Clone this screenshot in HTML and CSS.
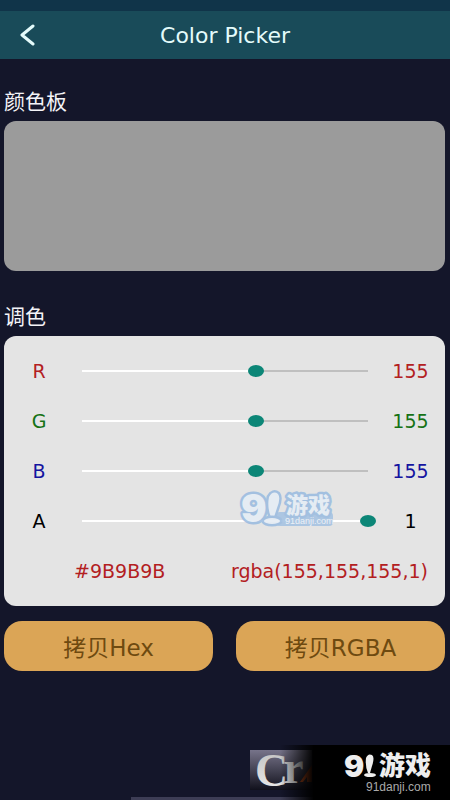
FILE: index.html
```html
<!DOCTYPE html>
<html lang="zh-CN">
<head>
  <meta charset="utf-8">
  <title>Color Picker</title>
  <meta name="viewport" content="width=device-width, initial-scale=1">
  <link rel="stylesheet" href="styles.css">
</head>
<body>
  <header class="topbar">
    <button class="back" type="button" aria-label="返回">
      <svg width="18" height="22" viewBox="0 0 18 22"><path d="M15 2 L4 11 L15 20" fill="none" stroke="#e4fbfb" stroke-width="3" stroke-linecap="round" stroke-linejoin="round"/></svg>
    </button>
    <h1>Color Picker</h1>
  </header>

  <main class="content">
    <h2>颜色板</h2>
    <div class="palette" id="palette"></div>

    <h2>调色</h2>
    <div class="panel">
      <div class="row red">
        <label for="r">R</label>
        <input type="range" id="r" min="0" max="255" value="155" style="--fill: 60.8%">
        <output for="r" id="r-value">155</output>
      </div>
      <div class="row green">
        <label for="g">G</label>
        <input type="range" id="g" min="0" max="255" value="155" style="--fill: 60.8%">
        <output for="g" id="g-value">155</output>
      </div>
      <div class="row blue">
        <label for="b">B</label>
        <input type="range" id="b" min="0" max="255" value="155" style="--fill: 60.8%">
        <output for="b" id="b-value">155</output>
      </div>
      <div class="row alpha">
        <label for="a">A</label>
        <input type="range" id="a" min="0" max="1" step="0.01" value="1" style="--fill: 100%">
        <output for="a" id="a-value">1</output>
        <svg class="stamp" width="100" height="42" viewBox="0 0 100 42">
          <rect x="38" y="24" width="57" height="14" rx="4" fill="#a6c3e2"/>
          <g class="stamp-edge">
            <text class="mark" x="3" y="34" font-size="38">9</text>
            <path d="M31 9 Q35 2 40 6 Q43 10 39 20 L36 29 L33 29 Q29 20 31 9 Z"/>
            <ellipse cx="34" cy="33" rx="8" ry="3"/>
            <text class="mark-cn" x="48" y="25" font-size="22">游戏</text>
          </g>
          <text class="mark-url" x="47" y="36" font-size="9" fill="#edf2f8">91danji.com</text>
        </svg>
      </div>
      <div class="codes">
        <span id="hex">#9B9B9B</span>
        <span id="rgba">rgba(155,155,155,1)</span>
      </div>
    </div>

    <div class="buttons">
      <button type="button" id="copy-hex">拷贝Hex</button>
      <button type="button" id="copy-rgba">拷贝RGBA</button>
    </div>
  </main>

  <div class="homebar"></div>
  <div class="banner">
    <svg width="200" height="55" viewBox="0 0 200 55">
      <defs>
        <linearGradient id="tile" x1="0" y1="0" x2="0" y2="1">
          <stop offset="0" stop-color="#77748a"/>
          <stop offset="1" stop-color="#11111c"/>
        </linearGradient>
        <linearGradient id="fade" x1="0" y1="0" x2="1" y2="0">
          <stop offset="0" stop-color="#000" stop-opacity="0"/>
          <stop offset="1" stop-color="#000"/>
        </linearGradient>
        <linearGradient id="silver" x1="0" y1="0" x2="0" y2="1">
          <stop offset="0" stop-color="#bbb"/>
          <stop offset="1" stop-color="#eee"/>
        </linearGradient>
      </defs>
      <rect x="0" y="5" width="62" height="40" fill="url(#tile)"/>
      <text class="serif" x="5" y="41" font-size="46" fill="url(#silver)">C<tspan dx="-5" dy="-3">r</tspan></text>
      <path d="M50 37 L62 20 V37 H57 V32 L53 37 Z" fill="#c4521f"/>
      <rect x="30" y="0" width="34" height="55" fill="url(#fade)"/>
      <rect x="63" y="0" width="137" height="55"/>
      <g fill="#eee">
        <text class="mark" x="94" y="32" font-size="30">9</text>
        <path d="M116 13 Q118 8 122 10 Q125 12 122 21 L120 28 L118 28 Q115 21 116 13 Z"/>
        <ellipse cx="120" cy="30" rx="6" ry="2"/>
        <text class="mark-cn" x="129" y="30" font-size="26">游戏</text>
        <text class="mark-url" x="116" y="46" font-size="12" fill="#aaa">91danji.com</text>
      </g>
    </svg>
  </div>

  <script src="picker.js"></script>
</body>
</html>
```
FILE: styles.css
```css
* {
  box-sizing: border-box;
}
body {
  margin: 0;
  min-height: 100vh;
  position: relative;
  background-color: #14162a;
  font-family: "DejaVu Sans", "Noto Sans CJK SC", sans-serif;
  font-size: 19px;
}
h1, h2 {
  margin: 0;
  font-weight: normal;
}
button {
  border: 0;
  font: inherit;
  cursor: pointer;
}
.topbar {
  display: grid;
  grid-template-columns: 54px 1fr 54px;
  align-items: center;
  height: 59px;
  border-top: 11px solid #103449;
  background-color: #194b59;
}
.topbar h1 {
  font-size: 22px;
  text-align: center;
  color: #e4fbfb;
}
.back {
  display: flex;
  justify-content: center;
  padding: 0;
  background: none;
}
.content {
  padding: 28px 5px 0 4px;
}
.content h2 {
  height: 34px;
  line-height: 30px;
  font-size: 21px;
  color: #f4f4f8;
}
.palette {
  height: 150px;
  margin-bottom: 31px;
  border-radius: 12px;
  background-color: #9b9b9b;
}
.panel {
  padding: 10px 0;
  border-radius: 12px;
  background-color: #e4e4e4;
}
.row {
  display: grid;
  grid-template-columns: 70px 1fr 69px;
  align-items: center;
  height: 50px;
  position: relative;
}
.row label, .row output {
  text-align: center;
}
.red { color: #b3201f; }
.green { color: #157215; }
.blue { color: #1414a0; }
.alpha { color: #000; }

/* the line is inset by half a thumb on each side */
input[type="range"] {
  -webkit-appearance: none;
  appearance: none;
  width: 100%;
  height: 20px;
  margin: 0;
  background-color: transparent;
  background-image: linear-gradient(to right, #fff var(--fill), #bfbfbf var(--fill));
  background-size: calc(100% - 16px) 2px;
  background-position: center;
  background-repeat: no-repeat;
}
input[type="range"]::-webkit-slider-thumb {
  -webkit-appearance: none;
  width: 16px;
  height: 12px;
  border-radius: 50%;
  background-color: #0c8677;
}
.codes {
  display: flex;
  justify-content: space-between;
  align-items: center;
  height: 50px;
  padding: 0 17px 0 70px;
  color: #b3201f;
}
.buttons {
  display: grid;
  grid-template-columns: 1fr 1fr;
  gap: 23px;
  margin-top: 15px;
}
.buttons button {
  height: 50px;
  padding: 0;
  border-radius: 18px;
  font-size: 23px;
  color: #6e4a10;
  background-color: #dba556;
}
.stamp {
  position: absolute;
  left: 234px;
  top: -8px;
  overflow: visible;
  opacity: .9;
  pointer-events: none;
}
.stamp-edge {
  fill: #e6edf5;
  stroke: #9dbde0;
  stroke-width: 5px;
  stroke-linejoin: round;
  paint-order: stroke;
}
.mark {
  font-family: Inter, sans-serif;
  font-weight: 900;
}
.mark-cn {
  font-family: "Noto Sans CJK SC", sans-serif;
  font-weight: 900;
}
.mark-url {
  font-family: "Liberation Sans", sans-serif;
}
.serif {
  font-family: "Liberation Serif", serif;
  font-weight: bold;
}
.homebar {
  position: absolute;
  left: 29%;
  right: 29%;
  bottom: 0;
  height: 3px;
  background-color: #3d3d55;
}
.banner {
  position: absolute;
  right: 0;
  bottom: 0;
}
.banner svg {
  display: block;
}
```
FILE: picker.js
```javascript
var sliders = ['r', 'g', 'b', 'a'];

function update() {
  var v = sliders.map(function (id) {
    var input = document.getElementById(id);
    input.style.setProperty('--fill', (input.value / input.max * 100) + '%');
    document.getElementById(id + '-value').textContent = input.value;
    return Number(input.value);
  });
  var hex = v.slice(0, 3).map(function (n) {
    return n.toString(16).padStart(2, '0');
  }).join('');
  var rgba = 'rgba(' + v.join(',') + ')';
  document.getElementById('hex').textContent = '#' + hex.toUpperCase();
  document.getElementById('rgba').textContent = rgba;
  document.getElementById('palette').style.backgroundColor = rgba;
}

function copyText(id) {
  navigator.clipboard.writeText(document.getElementById(id).textContent);
}

sliders.forEach(function (id) {
  document.getElementById(id).addEventListener('input', update);
});
document.getElementById('copy-hex').addEventListener('click', function () { copyText('hex'); });
document.getElementById('copy-rgba').addEventListener('click', function () { copyText('rgba'); });
update();
```
